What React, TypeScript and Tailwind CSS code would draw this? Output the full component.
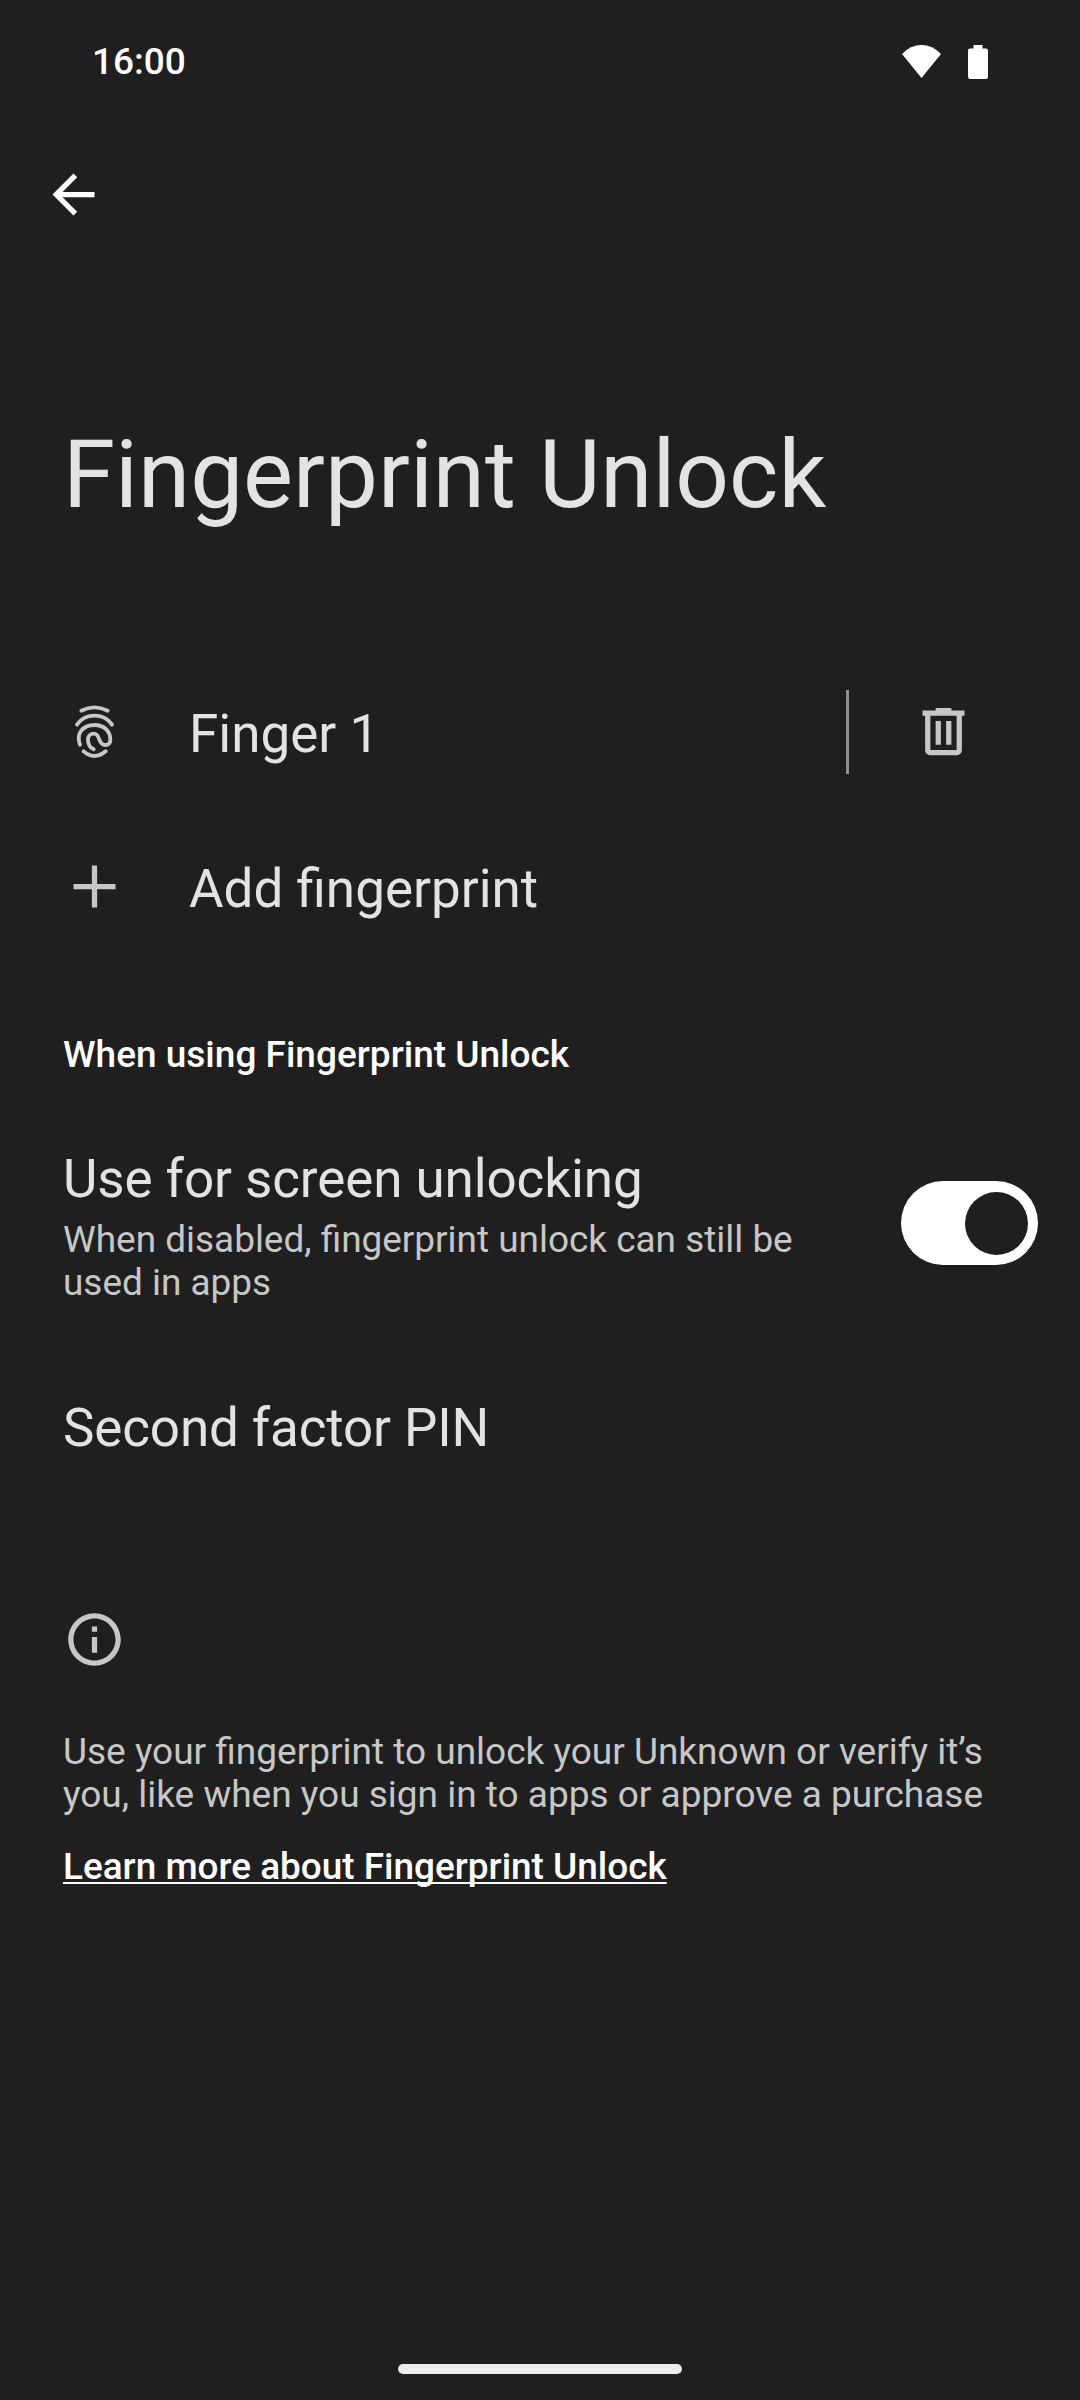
import React from "react";

function BackIcon() {
  return (
    <svg className="size-[63px]" viewBox="0 0 24 24" fill="currentColor">
      <path d="M20 11H7.830l5.590-5.590L12 4l-8 8 8 8 1.410-1.410L7.830 13H20v-2z" />
    </svg>
  );
}

function FingerprintIcon() {
  return (
    <svg className="size-[63px]" viewBox="0 0 189 189" fill="none" stroke="currentColor" strokeWidth="11.5" strokeLinecap="round">
      <path d="M55 32 Q94.500 12 134 32" />
      <path d="M42 74 Q60 47 94.500 47 Q129 47 147 74" />
      <path d="M51 134 C39 103 57 75 94.500 75 C123 75 142 93 142 119 C142 129 136 135 127 135 C104 135 113 101 93 101 C82 101 75 108 75 119 C75 133 82 143 92 148" />
      <path d="M62 154 Q94.500 182 128 154" />
    </svg>
  );
}

function PlusIcon() {
  return (
    <svg className="size-[63px]" viewBox="0 0 24 24" fill="currentColor">
      <path d="M20 13h-7v7h-2v-7H4v-2h7V4h2v7h7v2z" />
    </svg>
  );
}

function TrashIcon() {
  return (
    <svg className="size-[63px]" viewBox="0 0 24 24" fill="currentColor">
      <path d="M15 4V3H9v1H4v2h1v13c0 1.100.9 2 2 2h10c1.100 0 2-.9 2-2V6h1V4h-5zm2 15H7V6h10v13z" />
      <path d="M9 8h2v9H9zM13 8h2v9h-2z" />
    </svg>
  );
}

function InfoIcon() {
  return (
    <svg className="size-[63px]" viewBox="0 0 24 24" fill="currentColor">
      <path d="M11 7h2v2h-2zm0 4h2v6h-2zm1-9C6.480 2 2 6.480 2 12s4.480 10 10 10 10-4.480 10-10S17.520 2 12 2zm0 18c-4.410 0-8-3.590-8-8s3.590-8 8-8 8 3.590 8 8-3.590 8-8 8z" />
    </svg>
  );
}

function StatusBar() {
  return (
    <header className="flex h-[124px] items-start justify-between pl-[92px] pr-[92px] text-white">
      <span className="mt-[40px] text-[37px] font-medium leading-[44px]">16:00</span>
      <div className="mt-[45px] flex gap-[27px]">
        <svg className="h-[33px] w-[39px]" viewBox="0 0 39 33" fill="currentColor">
          <path d="M0 9 Q8.500 0 19.500 0 Q30.500 0 39 9 L19.500 33 Z" />
        </svg>
        <svg className="h-[34px] w-[20px]" viewBox="0 0 20 34" fill="currentColor">
          <path d="M5.500 0h9v3.500H18a2 2 0 0 1 2 2V32a2 2 0 0 1-2 2H2a2 2 0 0 1-2-2V5.500a2 2 0 0 1 2-2h3.500z" />
        </svg>
      </div>
    </header>
  );
}

export default function App() {
  return (
    <div className="flex h-[2400px] w-[1080px] flex-col bg-[#1f1f1f] font-[Roboto,sans-serif] text-[#e3e3e3]">
      <StatusBar />
      <nav className="flex h-[147px] items-start pl-[42px] pt-[39px] text-white">
        <button aria-label="Navigate up"><BackIcon /></button>
      </nav>
      <main className="flex flex-1 flex-col">
        <h1 className="mt-[148px] pl-[63px] text-[94.3px] leading-[112px]">Fingerprint Unlock</h1>

        <section className="mt-[123px]">
          <div className="flex h-[155px] items-center pl-[63px]">
            <span className="text-[#c7c7c7]"><FingerprintIcon /></span>
            <span className="ml-[63px] flex-1 pt-[5px] text-[53px] leading-[62px]">Finger 1</span>
            <div className="h-[84px] w-[3px] bg-[#8f8f8f]" />
            <button aria-label="Delete" className="ml-[63px] mr-[105px] text-[#c7c7c7]"><TrashIcon /></button>
          </div>
          <div className="flex h-[155px] items-center pl-[63px]">
            <span className="text-[#c7c7c7]"><PlusIcon /></span>
            <span className="ml-[63px] pt-[5px] text-[53px] leading-[62px]">Add fingerprint</span>
          </div>
        </section>

        <h2 className="mt-[69px] pl-[63px] text-[37px] font-medium leading-[43px] text-white">When using Fingerprint Unlock</h2>

        <section className="mt-[72px] flex items-center justify-between pl-[63px] pr-[42px]">
          <div className="w-[750px]">
            <div className="text-[53px] leading-[62px] tracking-[-0.1px]">Use for screen unlocking</div>
            <p className="mt-2 text-[36.93px] leading-[43px] text-[#c7c7c7]">When disabled, fingerprint unlock can still be used in apps</p>
          </div>
          <button role="switch" aria-checked="true" aria-label="Use for screen unlocking" className="mb-[6px] flex h-[84px] w-[137px] items-center justify-end rounded-full bg-white pr-[10.500px]">
            <span className="size-[63px] rounded-full bg-[#1f1f1f]" />
          </button>
        </section>

        <div className="mt-[93px] pl-[63px] text-[53px] leading-[62px] tracking-[-0.15px]">Second factor PIN</div>

        <section className="mt-[149px] px-[63px] text-[37px] leading-[43px]">
          <span className="block text-[#c7c7c7]"><InfoIcon /></span>
          <p className="mt-[59px] w-[940px] text-[#c7c7c7]">Use your fingerprint to unlock your Unknown or verify it’s you, like when you sign in to apps or approve a purchase</p>
          <a className="mt-[29px] block text-[36.93px] font-medium text-white underline decoration-[2px] underline-offset-[3px] [text-decoration-skip-ink:none]">Learn more about Fingerprint Unlock</a>
        </section>
      </main>
      <footer className="flex h-[36px] justify-center">
        <div className="h-[10px] w-[284px] rounded-full bg-[#ececec]" />
      </footer>
    </div>
  );
}
